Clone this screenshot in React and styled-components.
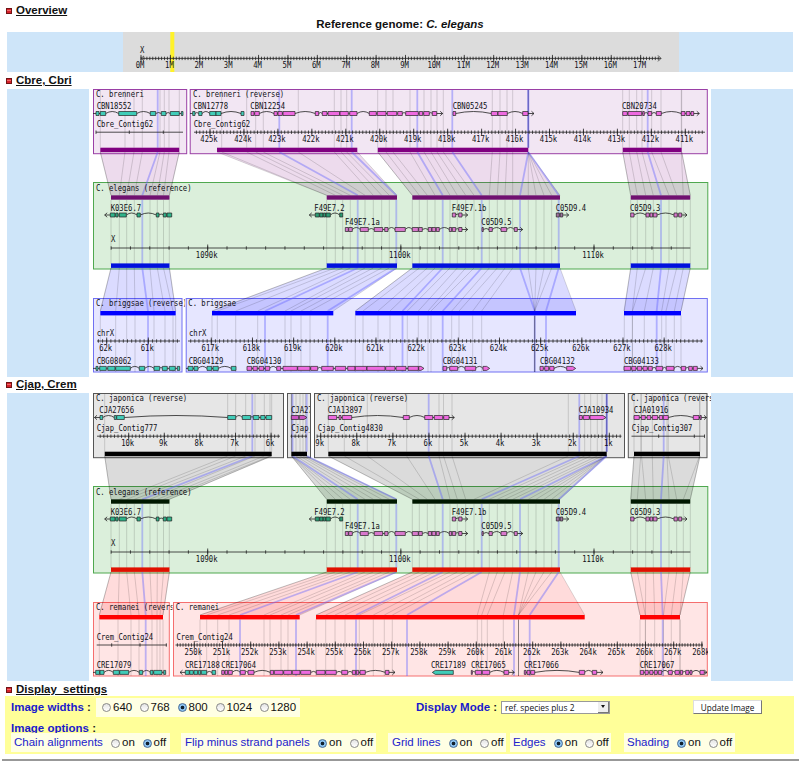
import React from "react";
import styled, { createGlobalStyle } from "styled-components";

const Global = createGlobalStyle`
  body { margin: 0; background: #fff; }
  * { box-sizing: border-box; }
`;

const CHAR = 4.34;
const TEAL = "#40ccb8";
const PINK = "#ee6ae0";

/* ---------- page parts ---------- */
const Page = styled.main`
  width: 800px;
  height: 765px;
  overflow: hidden;
  display: flex;
  flex-direction: column;
  font: 11.5px/13px "Liberation Sans", Arial, sans-serif;
  color: #111;
`;
const Heading = styled.h2`
  margin: 0;
  height: ${(p) => p.$height}px;
  padding: ${(p) => p.$top}px 0 0 6px;
  display: flex;
  align-items: flex-start;
  gap: 4px;
  font-size: 11.5px;
  line-height: 13px;
  font-weight: bold;
  word-spacing: ${(p) => p.$word || 0}px;
`;
const HeadingText = styled.span`
  text-decoration: underline;
  text-underline-offset: 1px;
`;
const Toggle = styled.span`
  width: 6px;
  height: 6px;
  margin-top: 4px;
  border: 1px solid #701414;
  background: linear-gradient(#d8202a 1px, #ee6a6a 1px, #ee6a6a 2px, #d8202a 2px);
`;
const GenomeTitle = styled.div`
  height: 15px;
  text-align: center;
  font-weight: bold;
  font-size: 11.5px;
  line-height: 15px;
`;
const Band = styled.section`
  height: ${(p) => p.$height}px;
  margin: 0 7px;
  padding-left: ${(p) => p.$shift || 0}px;
  display: flex;
  justify-content: center;
  background: #cee5f9;
`;
const Chart = styled.svg`
  display: block;
  flex: none;
  background: ${(p) => p.$bg};
`;
const ChartText = styled.text`
  font: 8.2px "DejaVu Sans Mono", monospace;
  fill: #101016;
`;

/* ---------- settings form ---------- */
const Settings = styled.form`
  margin: 0 6px 0 5px;
  height: 58px;
  padding-left: 6px;
  background: #ffff99;
`;
const SettingsRow = styled.div`
  display: flex;
  align-items: ${(p) => p.$align || "center"};
  height: ${(p) => p.$height}px;
`;
const Caption = styled.span`
  width: ${(p) => p.$width}px;
  color: #1a1acc;
  font-weight: bold;
  line-height: ${(p) => p.$line || 13}px;
  white-space: nowrap;
`;
const Colon = styled.span`
  color: #222;
`;
const OptionBox = styled.div`
  display: flex;
  align-items: center;
  width: ${(p) => p.$width}px;
  height: 19px;
  margin-right: ${(p) => p.$after || 0}px;
  padding-left: ${(p) => p.$pad}px;
  background: #ffffe4;
`;
const OptionName = styled.span`
  width: ${(p) => p.$width}px;
  color: #2222cc;
  white-space: nowrap;
`;
const Option = styled.label`
  display: flex;
  align-items: center;
  gap: 2px;
  width: ${(p) => p.$width}px;
`;
const Radio = styled.input.attrs({ type: "radio" })`
  appearance: none;
  flex: none;
  width: 9px;
  height: 9px;
  margin: 1px 0 0;
  border: 1px solid #888;
  border-radius: 50%;
  background: linear-gradient(#e4e4e4, #fff);
  &:checked {
    border-color: #456a98;
    background: radial-gradient(circle, #10202f 0 1.4px, #8cc4f2 2.2px);
  }
`;
const ModeSelect = styled.div`
  display: flex;
  justify-content: space-between;
  align-items: center;
  width: 109px;
  height: 13px;
  margin-right: 83px;
  padding-left: 3px;
  border: 1px solid #999;
  background: #fff;
  font: 8.4px/11px "Open Sans", sans-serif;
`;
const SelectArrow = styled.span`
  display: flex;
  align-items: center;
  justify-content: center;
  width: 11px;
  height: 11px;
  background: #eee;
  border-right: 1px solid #777;
  border-bottom: 1px solid #777;
  &::after {
    content: "";
    border: 2.5px solid transparent;
    border-top: 3px solid #111;
    border-bottom: 0;
  }
`;
const UpdateButton = styled.button`
  width: 69px;
  height: 14px;
  padding: 0;
  border: 1px solid #ddd;
  border-right-color: #777;
  border-bottom-color: #777;
  background: #fff;
  color: #111;
  font: 8.2px/11px "Open Sans", sans-serif;
`;
const Rule = styled.hr`
  width: 797px;
  height: 2px;
  margin: 5px 0 0 2px;
  border: 0;
  background: #989898;
`;

/* ---------- chart drawing ---------- */
function Label({ x, y, children, anchor }) {
  const width = children.length * CHAR;
  return (
    <ChartText x={anchor === "middle" ? x - width / 2 : x} y={y} textLength={width} lengthAdjust="spacingAndGlyphs">
      {children}
    </ChartText>
  );
}

function Axis({ from, to, y, first, step, labels = [], minor, size = 3.5, ends }) {
  let d = `M${from} ${y}H${to}`;
  if (minor) {
    const start = first - Math.floor((first - from) / minor) * minor;
    for (let x = start; x <= to; x += minor) d += `M${x} ${y - 1.7}v3.4`;
  }
  labels.forEach((_, i) => {
    const x = first + i * step;
    d += `M${x} ${y - size}v${size * 2}`;
  });
  if (ends) ends.forEach((x) => (d += `M${x} ${y - 1.7}v3.4`));
  return (
    <g>
      <path d={d} stroke="#222" strokeWidth="0.8" fill="none" />
      {labels.map((t, i) => (
        <Label key={t} x={first + i * step - 1} y={y + 9.5} anchor="middle">{t}</Label>
      ))}
    </g>
  );
}

/* A gene is [label, labelX, colour, exons, options]; options hold arrows, a lead-in or pointed ends. */
function Gene({ gene, y, labelY }) {
  const [name, lx, color, exons, o = {}] = gene;
  let line = "";
  exons.forEach((e, i) => {
    const next = exons[i + 1];
    if (!next) return;
    const gap = next[0] - e[1];
    const lift = gap > 6 ? 4 : gap > 2.5 ? 2 : 0;
    line += `M${e[1]} ${y}Q${(e[1] + next[0]) / 2} ${y - lift} ${next[0]} ${y}`;
  });
  const last = exons[exons.length - 1][1];
  if (o.start) line += `M${o.start} ${y}H${exons[0][0]}`;
  if (o.left) line += `M${exons[0][0]} ${y}H${o.left}m2.5 -2.2l-2.5 2.2l2.5 2.2`;
  if (o.right) line += `M${last} ${y}H${o.right}m-2.5 -2.2l2.5 2.2l-2.5 2.2`;
  return (
    <g>
      <path d={line} fill="none" stroke="#222" strokeWidth="0.8" />
      {exons.map(([a, b], i) => {
        const pr = o.pointRight && i === exons.length - 1;
        const d = pr
          ? `M${a} ${y - 2}H${b - 3}L${b} ${y}L${b - 3} ${y + 2}H${a}Z`
          : o.pointLeft
          ? `M${b} ${y - 2}H${a + 3}L${a} ${y}L${a + 3} ${y + 2}H${b}Z`
          : `M${a} ${y - 2}H${b}V${y + 2}H${a}Z`;
        return <path key={i} d={d} fill={color} stroke="#222" strokeWidth="0.7" />;
      })}
      <Label x={lx} y={labelY}>{name}</Label>
    </g>
  );
}

const REF_BLOCKS = [[111, 169.5], [326.7, 397], [412.3, 560], [630.7, 690.3]];
const REF_LINES = [
  [111, 119.3, 126.7, 134.3, 142.3, 150, 157.3, 163.5, 169.3],
  [326.7, 335.3, 342.7, 350.3, 357.7, 365, 373.3, 381.7, 389.3, 396.3],
  [412.3, 419.3, 427.3, 435, 442.7, 450, 457.3, 465.7, 474, 481.7, 489.3, 497.3, 505, 512.7, 520, 528.3, 536, 544, 551.7, 558.7],
  [630.7, 637.3, 645.7, 653.3, 661, 669, 676.7, 683.3, 690.3],
];
const isMajor = (i) => i % 5 === 4;

const REF_GENES = [
  ["K03E6.7", 110.7, "#2fb389", [[110.3, 115], [115.7, 118], [119.3, 126.3], [137, 140.3], [156.3, 159], [163.3, 166.3], [167, 171.7]], { left: 104.7 }],
  ["F49E7.2", 314.3, "#2a9c72", [[315.3, 319.3], [319.7, 323], [323.3, 325.7], [326, 330.3], [339.7, 342.7]], { left: 309.3 }],
  ["F49E7.1b", 451.7, "#d878cc", [[452.3, 455.7], [458.7, 462]], { right: 467.7 }],
  ["C05D9.4", 555.7, "#a070a0", [[556.3, 559.3], [560.3, 562.7]], { right: 568.7 }],
  ["C05D9.3", 630, "#d878cc", [[630.7, 634], [646, 649.3], [650, 652.7], [653.3, 657], [674, 677.3], [678.7, 681.7]], { right: 687 }],
];
const REF_GENES_LOW = [
  ["F49E7.1a", 345, "#d878cc", [[345.3, 348.3], [348.7, 352.3], [360.3, 368.3], [374.3, 382.7], [384.7, 388], [395, 405.3], [412.3, 418.3], [418.7, 422.3], [428.3, 431.7], [432, 435.7], [436.3, 439.3], [449.3, 451.7], [452.3, 455.7], [458.7, 462]], { right: 467.7 }],
  ["C05D9.5", 481.3, "#d878cc", [[482, 483.3], [489, 492.3], [501, 506.7], [514.3, 517.3]], { right: 522.7 }],
];

const down = (from, to) => Array.from({ length: from - to + 1 }, (_, i) => `${from - i}k`);
const up = (from, to) => Array.from({ length: to - from + 1 }, (_, i) => `${from + i}k`);

const BRENNERI = {
  bar: "#800080", stroke: "#9a3fa6", fill: "#f2e6f3", refBar: "#701070",
  panels: [
    { x: 93, end: 186.7, clip: 190, title: "C. brenneri", contig: "Cbre_Contig62", tx: 96,
      axis: { from: 96, to: 183, ends: [96, 129.3, 163.3] },
      genes: [["CBN18552", 96.7, TEAL, [[96, 99], [100.3, 105.7], [118.7, 136.7], [150.3, 155.7], [161.3, 166], [170.3, 179.3], [181.3, 183]], { start: 93 }]] },
    { x: 189.7, end: 707.3, clip: 711, title: "C. brenneri (reverse)", contig: "Cbre_Contig62", tx: 193,
      axis: { from: 194, to: 705, first: 210, step: 33.95, minor: 3.395, labels: down(425, 411) },
      genes: [
        ["CBN12778", 193.3, TEAL, [[192.7, 195], [198.7, 202], [209.7, 216], [216, 221], [241, 244]], { start: 190 }],
        ["CBN12254", 250.3, PINK, [[251, 254], [254.7, 259.3], [274, 277.3], [278, 282.3], [283, 295], [315.3, 318.7], [322.3, 327], [328, 339.7], [340, 348.3], [349.7, 357], [369.3, 376.3], [377.3, 386], [387.3, 396.7], [397.7, 402.3], [405.7, 418.3], [419.3, 422.7], [423.7, 429.3], [432.3, 436.7]], { right: 442.7 }],
        ["CBN05245", 452.7, PINK, [[453, 455.7], [491.3, 497.7], [498, 507.3], [522.7, 528]], { right: 534 }],
        ["CBN20734", 622, PINK, [[622.7, 627.3], [628, 641.7], [642.7, 644.3], [648, 651.7], [656.3, 661.3], [681.3, 685], [686.3, 690], [691, 693.7]], { right: 699.3 }],
      ] },
  ],
  blocks: [[100.3, 179.3], [217, 357.3], [377.7, 528.3], [622.7, 681.7]],
  lines: [
    [100.3, 125, 134, 142.3, 157.7, 160, 164.3, 169, 179.3],
    [221.7, 246.7, 255.7, 263.3, 279.3, 298.3, 334.3, 341, 346.7, 351.7],
    [377.7, 386, 393, 410, 417.3, 424, 431, 437, 443.3, 452.3, 492.3, 500, 507, 512.7, 528.3, 528.3, 528.3, 528.3, 528.3, 528.3],
    [622.7, 629.3, 636.7, 642, 647.7, 651.7, 661, 681.3, 681.7],
  ],
};
const BRIGGSAE = {
  bar: "#0000ff", stroke: "#7070f2", fill: "#e6e6ff", refBar: "#0010dd",
  panels: [
    { x: 93, end: 182, clip: 185, title: "C. briggsae (reverse)", contig: "chrX", tx: 96,
      axis: { from: 97, to: 180, first: 106.7, step: 41.6, minor: 4.16, labels: ["62k", "61k"] },
      genes: [["CBG08062", 96.7, TEAL, [[96, 98], [99.7, 106.3], [107.7, 115], [115.7, 130.3], [139.3, 144.7], [154, 159.7], [162.3, 167.3], [169.3, 175.3], [177.3, 179.7]], { start: 93 }]] },
    { x: 185.7, end: 707.3, clip: 711, title: "C. briggsae", contig: "chrX", tx: 188.3,
      axis: { from: 188, to: 703, first: 211.3, step: 41.17, minor: 4.117, labels: up(617, 628) },
      genes: [
        ["CBG04129", 188.7, TEAL, [[188, 193], [194, 198], [207, 211.7], [213, 218.3], [231.3, 236]], { start: 186 }],
        ["CBG04130", 246.7, PINK, [[247, 251.7], [253, 257.3], [259, 263.7], [265.3, 269.7], [276.7, 280.7], [283, 297.3], [297.7, 310], [310.7, 317.7], [321.7, 333.3], [335.3, 345.7], [347.7, 355], [355.3, 366.7], [367, 385], [385.7, 395], [396, 406], [408, 418.3], [418.7, 424]], { pointRight: true }],
        ["CBG04131", 442.7, PINK, [[443, 446.7], [449.7, 457.7], [465, 475.7], [483, 489.7]], { pointRight: true }],
        ["CBG04132", 540, PINK, [[540, 543.3], [544.7, 548.7], [549.7, 554], [566.7, 575.7]], { pointRight: true }],
        ["CBG04133", 624, PINK, [[624, 630.7], [631.7, 636], [637.3, 641.7], [643, 647.3], [648.3, 652.3], [656, 662.7], [666.3, 674], [681.3, 685.7], [688.7, 692.3], [693.3, 697.3]], { right: 703 }],
      ] },
  ],
  blocks: [[100.3, 175.7], [212, 333.3], [355.3, 576], [624, 681]],
  lines: [
    [100.3, 115.7, 126.7, 135, 148, 154, 165, 173, 175.7],
    [212, 217.3, 235.7, 257.7, 265, 285, 291, 301, 310, 327.7],
    [355.3, 363, 378, 390, 402.5, 407.3, 418.3, 428, 431, 442.7, 451.7, 459, 472.7, 481.7, 534.7, 534.7, 534.7, 534.7, 534.7, 546],
    [624.3, 632.3, 632.5, 644.3, 656.7, 661.7, 666, 674.3, 681],
  ],
};
const JAPONICA = {
  bar: "#000000", stroke: "#555", fill: "#e6e6e6", refBar: "#001800",
  panels: [
    { x: 93, end: 283.5, clip: 287, title: "C. japonica (reverse)", contig: "Cjap_Contig777", tx: 96,
      axis: { from: 97, to: 280, first: 128.7, step: 35.6, minor: 3.56, labels: down(10, 6) },
      genes: [["CJA27656", 99.3, TEAL, [[100, 102.7], [114.3, 116.3], [116.7, 124.3], [227.7, 235.7], [242.3, 250.7], [253.3, 259], [260.7, 265], [266, 271.7]], { left: 94.5 }]] },
    { x: 287, end: 310.5, clip: 310, title: "", contig: "Cjap_Contig777", tx: 290.5,
      axis: { from: 290.5, to: 307, first: 291.5, step: 1, minor: 3.6 },
      genes: [["CJA27655", 291, "#cc55c4", [[291.3, 298.7], [299.3, 307]], { pointRight: true }]] },
    { x: 314, end: 624.5, clip: 627, title: "C. japonica (reverse)", contig: "Cjap_Contig4830", tx: 317,
      axis: { from: 317, to: 621.5, first: 320.7, step: 36.08, minor: 3.608, labels: down(9, 1) },
      genes: [
        ["CJA13897", 327.7, PINK, [[328.3, 336.7], [339, 341], [342.3, 351.7], [403.3, 409.3], [424.7, 432.7], [434.3, 442.7], [443.7, 449]], { right: 454.3 }],
        ["CJA10934", 578.7, PINK, [[579.3, 582.3], [583.3, 589.3], [590, 606]], { pointRight: true }],
      ] },
    { x: 627.8, end: 707, clip: 711, title: "C. japonica (reverse)", contig: "Cjap_Contig307", tx: 631,
      axis: { from: 631.5, to: 704.5, ends: [658.7, 694.3, 704.5] },
      genes: [["CJA01916", 633.7, PINK, [[634, 639.3], [641.3, 645.3], [647, 650.7], [652.3, 657.7], [659.3, 662.7], [663.3, 668.3], [693.3, 699], [700, 701.3]], { right: 706.5 }]] },
  ],
  blocks: [[104.7, 271.7], [291.3, 307], [328.3, 606.7], [634, 700]],
  lines: [
    [104.7, 227.7, 235.7, 245.7, 252.3, 255, 264.3, 270, 271.7],
    [291.3, 291.5, 291.7, 292, 292.5, 296, 300, 303, 305.5, 306.7],
    [328.3, 344.3, 367.3, 406.7, 428.7, 439, 443.5, 452, 568.3, 579.3, 584.7, 590.7, 597.3, 602, 606.7, 606.7, 606.7, 606.7, 606.7, 606.7],
    [634, 640.7, 641.5, 652.3, 663.7, 667, 668.3, 699.5, 700],
  ],
};
const REMANEI = {
  bar: "#ff0000", stroke: "#f56e6e", fill: "#ffe5e5", refBar: "#e01000",
  panels: [
    { x: 93, end: 169.3, clip: 172.5, title: "C. remanei (reverse)", contig: "Crem_Contig24", tx: 96,
      axis: { from: 96.7, to: 166.7, ends: [111.7, 140, 166.3] },
      genes: [["CRE17079", 96.7, TEAL, [[95.7, 99.7], [100, 104], [113.3, 119.3], [119.7, 128.7], [139.3, 142.7], [150.3, 153], [153.7, 162], [163.7, 165.7]], { start: 93 }]] },
    { x: 173, end: 707.3, clip: 708, title: "C. remanei", contig: "Crem_Contig24", tx: 175.7,
      axis: { from: 175.5, to: 703, first: 194.3, step: 28.2, minor: 2.82, labels: up(250, 268) },
      genes: [
        ["CRE17188", 185, TEAL, [[185.3, 189.3], [189.7, 193.3], [194, 197.7], [198.3, 200.7], [201.3, 206.7], [212, 215.7]], { left: 180 }],
        ["CRE17064", 221.3, PINK, [[221.7, 224.3], [225, 227.7], [228.3, 232.3], [240.3, 245.3], [248, 254], [270.3, 273.7], [274.3, 283], [283.7, 291.7], [292.3, 300], [300.7, 310.7], [316.3, 325], [325.7, 336.3], [341.7, 347.7], [352.3, 355.7], [356.3, 358.7], [360, 365.3], [385.3, 389]], { right: 395 }],
        ["CRE17189", 431, TEAL, [[432.3, 453.3]], { pointLeft: true }],
        ["CRE17065", 471, PINK, [[471.3, 472.3], [475.3, 481.7], [482.3, 489.7], [504, 508.7]], { right: 514.3 }],
        ["CRE17066", 524, PINK, [[524.3, 526], [527, 530], [530.7, 534.7], [579.3, 584.7], [592.3, 596.7]], { right: 603 }],
        ["CRE17067", 639.7, PINK, [[640.3, 643.7], [645, 648.3], [649.7, 653], [654.3, 657.3], [658.3, 661.7], [668.3, 672.3], [675, 679.3], [680.3, 682.7], [685.7, 689], [690, 692], [700, 704.3]], { right: 707 }],
      ] },
  ],
  blocks: [[99.3, 163], [200, 299.7], [316, 584.7], [640, 680]],
  lines: [
    [99.3, 118, 131, 139, 145.7, 152, 157, 160, 163],
    [200, 206.7, 217.7, 229, 240, 264, 270, 281, 288, 296],
    [316, 325.7, 335, 345, 356, 359.3, 373.3, 384.3, 392.3, 407, 477.3, 481.7, 487.3, 503.3, 514, 518.5, 518.5, 518.5, 518.5, 529.7],
    [640, 645.3, 645.5, 654.7, 662.7, 663.5, 671.3, 680, 680],
  ],
};

/* Vertical metrics for the species above and below the reference. */
const ABOVE = { top: 89.5, bottom: 153.7, title: 97, gene: 113.5, geneLabel: 109.4, contig: 127.2, axis: 132.2, bar: 147.7, edge: 152, lineFrom: 90, lineTo: 147.7, refEdge: 195.3 };
const BELOW = { top: 298.5, bottom: 372, title: 306.3, gene: 368.4, geneLabel: 363.7, contig: 336, axis: 341, bar: 311, edge: 311, lineFrom: 315.5, lineTo: 372, refEdge: 268 };

function Species({ data, m, id }) {
  return (
    <g>
      {data.panels.map((p) => (
        <rect key={p.x} x={p.x + 0.5} y={m.top} width={p.end - p.x - 0.5} height={m.bottom - m.top} fill={data.fill} stroke={data.stroke} />
      ))}
      {data.blocks.map(([a, b], i) => (
        <polygon key={a} fill={data.bar} fillOpacity="0.14"
          points={`${a},${m.edge} ${b},${m.edge} ${REF_BLOCKS[i][1]},${m.refEdge} ${REF_BLOCKS[i][0]},${m.refEdge}`} />
      ))}
      {data.blocks.map(([a, b], i) => (
        <path key={a} fill="none" stroke="#000" strokeOpacity="0.2" strokeWidth="0.7"
          d={`M${a} ${m.edge}L${REF_BLOCKS[i][0]} ${m.refEdge}M${b} ${m.edge}L${REF_BLOCKS[i][1]} ${m.refEdge}`} />
      ))}
      {data.lines.map((list, b) => list.map((x, i) => (
        <path key={`${b}-${i}`} fill="none"
          stroke={isMajor(i) ? "#6464ff" : "#000"}
          strokeOpacity={isMajor(i) ? 0.42 : 0.18}
          strokeWidth={isMajor(i) ? 1.8 : 0.8}
          d={`M${x} ${m.lineFrom}V${m.lineTo}M${x} ${m.edge}L${REF_LINES[b][i]} ${m.refEdge}`} />
      )))}
      {data.panels.map((p, i) => (
        <g key={p.x} clipPath={`url(#${id}-${i})`}>
          <clipPath id={`${id}-${i}`}>
            <rect x={p.x} y={m.top} width={p.clip - p.x} height={m.bottom - m.top + 1} />
          </clipPath>
          {p.title && <Label x={p.tx} y={m.title}>{p.title}</Label>}
          <Label x={p.tx + 0.7} y={m.contig}>{p.contig}</Label>
          <Axis y={m.axis} {...p.axis} />
          {p.genes.map((g) => <Gene key={g[0]} gene={g} y={m.gene} labelY={m.geneLabel} />)}
        </g>
      ))}
      {data.blocks.map(([a, b]) => <rect key={a} x={a} y={m.bar} width={b - a} height="4.4" fill={data.bar} />)}
    </g>
  );
}

function SyntenyChart({ above, below, id, height }) {
  return (
    <Chart $bg="#fff" width="622" height={height} viewBox={`89 89 622 ${height}`}>
      <rect x="93.5" y="182.5" width="614.3" height="86.5" fill="#dbefdb" stroke="#4fa84f" />
      <Species data={above} m={ABOVE} id={`${id}-above`} />
      <Species data={below} m={BELOW} id={`${id}-below`} />
      {REF_LINES.map((list, b) => list.map((x, i) => (
        <path key={`${b}-${i}`} d={`M${x} 200V264`} stroke={isMajor(i) ? "#6464ff" : "#000"}
          strokeOpacity={isMajor(i) ? 0.38 : 0.18} strokeWidth={isMajor(i) ? 1.8 : 0.8} />
      )))}
      {REF_BLOCKS.map(([a, b]) => (
        <g key={a}>
          <rect x={a} y="195.3" width={b - a} height="4.4" fill={above.refBar} />
          <rect x={a} y="263.4" width={b - a} height="4.5" fill={below.refBar} />
        </g>
      ))}
      <Label x={96} y={190.5}>C. elegans (reference)</Label>
      <Label x={111} y={242.2}>X</Label>
      <Axis from={111} to={690.3} y={248} first={207.7} step={193.15} minor={19.315} labels={["1090k", "1100k", "1110k"]} />
      {REF_GENES.map((g) => <Gene key={g[0]} gene={g} y={215} labelY={210.8} />)}
      {REF_GENES_LOW.map((g) => <Gene key={g[0]} gene={g} y={229.5} labelY={225.2} />)}
    </Chart>
  );
}

function OverviewChart() {
  const labels = Array.from({ length: 18 }, (_, i) => `${i}M`);
  return (
    <Chart $bg="#dcdcdc" width="556" height="40" viewBox="123 32 556 40">
      <rect x="170.3" y="32" width="4" height="40" fill="#fff22a" />
      <Label x={140} y={53}>X</Label>
      <Axis from={141} to={661} y={58.4} first={141} step={29.39} minor={2.939} labels={labels} />
      <path d="M144 55.9L141 58.4L144 60.9M658 55.4L661 58.4L658 61.4" fill="none" stroke="#333" strokeWidth="0.8" />
    </Chart>
  );
}

function Choice({ name, values, selected, widths }) {
  return values.map((v, i) => (
    <Option key={v} $width={widths[i]}>
      <Radio name={name} defaultChecked={v === selected} />
      {v}
    </Option>
  ));
}

const TOGGLES = [
  { name: "Chain alignments", width: 159, pad: 3, text: 97, after: 11, value: "off" },
  { name: "Flip minus strand panels", width: 195, pad: 4, text: 133, after: 12, value: "on" },
  { name: "Grid lines", width: 118, pad: 4, text: 56.5, after: 4, value: "on" },
  { name: "Edges", width: 101, pad: 3, text: 41, after: 13, value: "on" },
  { name: "Shading", width: 111, pad: 3, text: 50, after: 0, value: "on" },
];

function Section({ title, ...rest }) {
  return (
    <Heading {...rest}>
      <Toggle />
      <HeadingText>{title}</HeadingText>
    </Heading>
  );
}

export default function App() {
  return (
    <Page>
      <Global />
      <Section title="Overview" $height={17} $top={4} />
      <GenomeTitle>Reference genome: <i>C. elegans</i></GenomeTitle>
      <Band $height={40} $shift={2}><OverviewChart /></Band>
      <Section title="Cbre, Cbri" $height={17} $top={2} />
      <Band $height={288}><SyntenyChart above={BRENNERI} below={BRIGGSAE} id="first" height={288} /></Band>
      <Section title="Cjap, Crem" $height={16} $top={1} />
      <Band $height={288}><SyntenyChart above={JAPONICA} below={REMANEI} id="second" height={288} /></Band>
      <Section title="Display settings" $height={15} $top={2} $word={3} />
      <Settings onSubmit={(e) => e.preventDefault()}>
        <SettingsRow $height={22}>
          <Caption $width={85}>Image widths <Colon>:</Colon></Caption>
          <OptionBox $width={204} $pad={6} $after={116}>
            <Choice name="width" values={["640", "768", "800", "1024", "1280"]} selected="800" widths={[37.5, 38, 38, 44, 40]} />
          </OptionBox>
          <Caption $width={85}>Display Mode <Colon>:</Colon></Caption>
          <ModeSelect>ref. species plus 2<SelectArrow /></ModeSelect>
          <UpdateButton>Update Image</UpdateButton>
        </SettingsRow>
        <SettingsRow $height={15} $align="flex-end">
          <Caption $width={90} $line={9}>Image options <Colon>:</Colon></Caption>
        </SettingsRow>
        <SettingsRow $height={19}>
          {TOGGLES.map((t) => (
            <OptionBox key={t.name} $width={t.width} $pad={t.pad} $after={t.after}>
              <OptionName $width={t.text}>{t.name}</OptionName>
              <Choice name={t.name} values={["on", "off"]} selected={t.value} widths={[31.5, 26]} />
            </OptionBox>
          ))}
        </SettingsRow>
      </Settings>
      <Rule />
    </Page>
  );
}
